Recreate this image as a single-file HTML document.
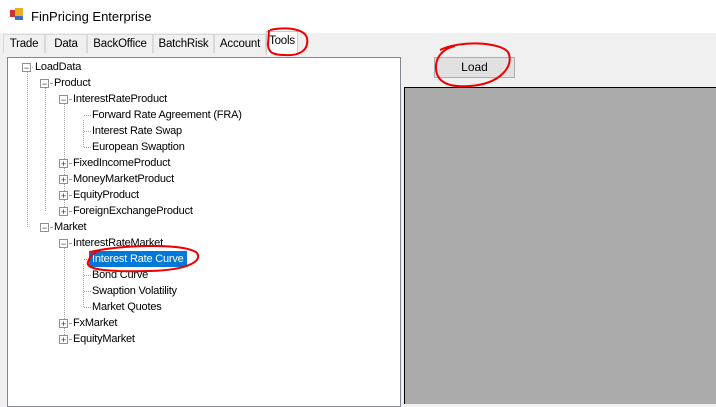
<!DOCTYPE html>
<html><head><style>
body{margin:0;width:716px;height:404px;overflow:hidden;background:#f0f0f0;font-family:"Liberation Sans",sans-serif;font-size:11px;letter-spacing:-0.2px;position:relative}
.abs{position:absolute}
.title{left:0;top:0;width:716px;height:33px;background:#fff}
.tab{position:absolute;top:34px;height:19px;line-height:19px;border:1px solid #d9d9d9;border-bottom:none;background:#f0f0f0;box-sizing:border-box;text-align:center;color:#000;font-size:11.5px}
.tree{left:7px;top:57px;width:394px;height:350px;background:#fff;border:1px solid #828790;box-sizing:border-box}
.row{position:absolute;height:16px;line-height:16px;white-space:nowrap;z-index:3}
.box{position:absolute;width:9px;height:9px;border:1px solid #919191;background:#fff;font-size:9px;line-height:8px;text-align:center;color:#333;box-sizing:border-box;letter-spacing:0}
.dl{position:absolute;border-left:1px dotted #a0a0a0}
.dh{position:absolute;border-top:1px dotted #a0a0a0;width:8px}
</style></head><body>
<div class="abs title"></div>
<div class="abs" style="left:10px;top:10px;width:7px;height:7px;background:#c33"></div>
<div class="abs" style="left:15px;top:8px;width:8px;height:8px;background:#e8b020"></div>
<div class="abs" style="left:15px;top:16px;width:8px;height:4px;background:#3a6fc0"></div>
<div class="abs" style="left:31px;top:9px;font-size:13px;letter-spacing:0">FinPricing Enterprise</div>
<div class="tab" style="left:3px;width:42px">Trade</div>
<div class="tab" style="left:45px;width:42px">Data</div>
<div class="tab" style="left:87px;width:66px">BackOffice</div>
<div class="tab" style="left:153px;width:61px">BatchRisk</div>
<div class="tab" style="left:214px;width:52px">Account</div>
<div class="tab" style="left:266px;top:31px;height:24px;background:#fff;width:32px;border-color:#ccc">Tools</div>
<div class="abs tree"></div>
<div class="dl" style="left:27px;top:72px;height:155px"></div>
<div class="dl" style="left:45px;top:88px;height:123px"></div>
<div class="dl" style="left:64px;top:104px;height:107px"></div>
<div class="dl" style="left:83px;top:120px;height:27px"></div>
<div class="dl" style="left:64px;top:248px;height:91px"></div>
<div class="dl" style="left:83px;top:264px;height:43px"></div>
<div class="abs" style="left:89px;top:251px;width:98px;height:16px;background:#0078d7;z-index:2"></div>
<div id="t"></div>
<div class="abs" style="left:434px;top:57px;width:81px;height:21px;background:#e1e1e1;border:1px solid #adadad;box-sizing:border-box;text-align:center;line-height:19px;font-size:12px;letter-spacing:0">Load</div>
<div class="abs" style="left:404px;top:87px;width:312px;height:317px;background:#ababab;border-top:1px solid #000;border-left:1px solid #000;box-sizing:border-box"></div>
<svg class="abs" style="left:0;top:0;z-index:5" width="716" height="404">
<g fill="none" stroke="#e00" stroke-width="2">
<path d="M270 30 C290 26 305 30 307 38 C309 50 300 56 285 55 C272 55 268 52 268 44 L269 30"/>
<path d="M440 50 C460 40 500 42 508 52 C515 66 500 84 470 86 C445 88 435 80 436 65 C437 55 445 48 455 46"/>
<path d="M90 252 C120 245 180 243 196 252 C204 260 190 270 150 271 C110 272 85 270 88 262 C90 256 95 251 102 250"/>
</g></svg>
<script>
var rows=[[35,67,'LoadData',22,'−'],[54,83,'Product',40,'−'],[73,99,'InterestRateProduct',59,'−'],[92,115,'Forward Rate Agreement (FRA)'],[92,131,'Interest Rate Swap'],[92,147,'European Swaption'],[73,163,'FixedIncomeProduct',59,'+'],[73,179,'MoneyMarketProduct',59,'+'],[73,195,'EquityProduct',59,'+'],[73,211,'ForeignExchangeProduct',59,'+'],[54,227,'Market',40,'−'],[73,243,'InterestRateMarket',59,'−'],[92,259,'Interest Rate Curve'],[92,275,'Bond Curve'],[92,291,'Swaption Volatility'],[92,307,'Market Quotes'],[73,323,'FxMarket',59,'+'],[73,339,'EquityMarket',59,'+']];
var h='';rows.forEach(function(r){var c=r[2]=='Interest Rate Curve'?'color:#fff;':'';
if(r[3]!==undefined){h+='<div class="box" style="left:'+r[3]+'px;top:'+(r[1]-4)+'px">'+r[4]+'</div><div class="dh" style="left:'+(r[3]+10)+'px;top:'+r[1]+'px;width:'+(r[0]-r[3]-12)+'px"></div>';}
else{h+='<div class="dh" style="left:84px;top:'+r[1]+'px;width:7px"></div>';}
h+='<div class="row" style="left:'+r[0]+'px;top:'+(r[1]-8)+'px;'+c+'">'+r[2]+'</div>';});
document.getElementById('t').innerHTML=h;
</script>
</body></html>
